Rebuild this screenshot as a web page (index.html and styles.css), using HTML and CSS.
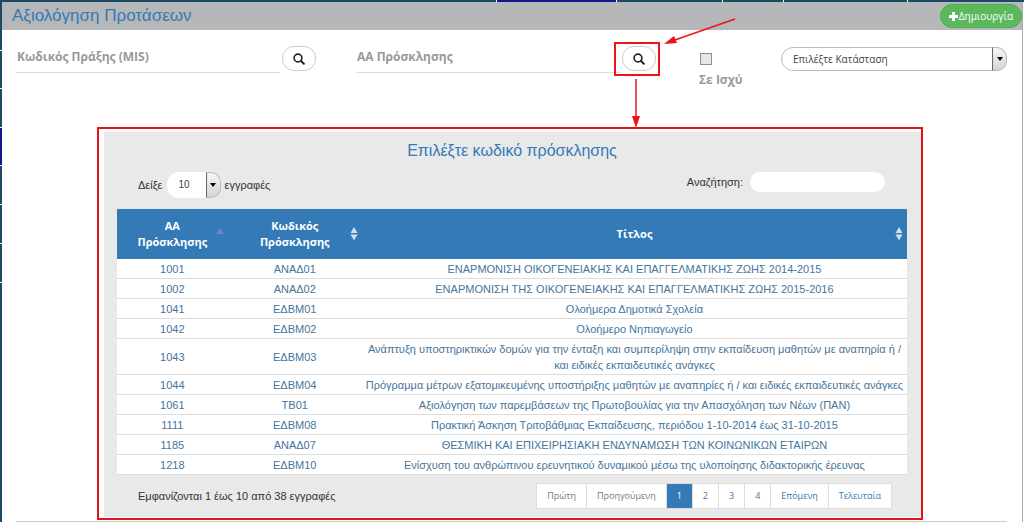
FILE: index.html
```html
<!DOCTYPE html>
<html lang="el">
<head>
<meta charset="utf-8">
<meta name="viewport" content="width=device-width, initial-scale=1">
<title>Αξιολόγηση Προτάσεων</title>
<link rel="stylesheet" href="styles.css">
</head>
<body>
<div class="topnav"><i></i><i class="current"></i><i></i><i></i><i></i><i></i></div>
<div class="shell">
  <div class="sidenav"><i></i><i></i><i></i><i class="current"></i><i></i><i></i><i></i><i></i></div>
  <main class="page">
    <header class="titlebar">
      <h1>Αξιολόγηση Προτάσεων</h1>
      <button class="create" type="button"><svg width="9" height="9" viewBox="0 0 9 9" aria-hidden="true"><path d="M3 0h3v3h3v3H6v3H3V6H0V3h3z" fill="#fff"/></svg>Δημιουργία</button>
    </header>
    <form class="filters">
      <div class="field">
        <input class="line" type="text" placeholder="Κωδικός Πράξης (MIS)" aria-label="Κωδικός Πράξης (MIS)">
        <div class="lookup">
          <button class="search" type="button" aria-label="Αναζήτηση πράξης"><svg width="12" height="12" viewBox="0 0 12 12" aria-hidden="true"><circle cx="5" cy="5" r="3.9" fill="none" stroke="#222" stroke-width="1.6"/><path d="M8 8l2.8 2.8" stroke="#222" stroke-width="2" stroke-linecap="round"/></svg></button>
        </div>
      </div>
      <div class="field">
        <input class="line" type="text" placeholder="ΑΑ Πρόσκλησης" aria-label="ΑΑ Πρόσκλησης">
        <div class="lookup">
          <button class="search" type="button" aria-label="Αναζήτηση πρόσκλησης"><svg width="12" height="12" viewBox="0 0 12 12" aria-hidden="true"><circle cx="5" cy="5" r="3.9" fill="none" stroke="#222" stroke-width="1.6"/><path d="M8 8l2.8 2.8" stroke="#222" stroke-width="2" stroke-linecap="round"/></svg></button>
          <span class="marker"></span>
          <svg class="pointer" width="130" height="118" viewBox="0 0 130 118" aria-hidden="true"><g fill="#f01018" stroke="#f01018"><path d="M121 8L58 30" stroke-width="1.5"/><path d="M50 33l10-8 3 7z" stroke="none"/><path d="M22 68v42" stroke-width="1.5"/><path d="M22 117l-4-12h8z" stroke="none"/></g></svg>
        </div>
      </div>
      <div class="active"><input type="checkbox" id="active"><label for="active">Σε Ισχύ</label></div>
      <div class="select status">
        <select aria-label="Κατάσταση"><option>Επιλέξτε Κατάσταση</option></select>
        <span class="drop"></span>
      </div>
    </form>
    <section class="dialog">
      <div class="panel">
        <h2>Επιλέξτε κωδικό πρόσκλησης</h2>
        <div class="tools">
          <label class="length">Δείξε <span class="select count"><select><option>10</option></select><span class="drop"></span></span> εγγραφές</label>
          <label class="find">Αναζήτηση: <input type="search"></label>
        </div>
        <table>
          <colgroup><col class="c1"><col class="c2"><col class="c3"></colgroup>
          <thead><tr>
            <th><div class="head"><span>ΑΑ Πρόσκλησης</span><svg width="8" height="14" viewBox="0 0 8 14" aria-hidden="true"><path d="M4 1l4 6H0z" fill="#7b7fd0"/></svg></div></th>
            <th><div class="head"><span>Κωδικός Πρόσκλησης</span><svg width="8" height="14" viewBox="0 0 8 14" aria-hidden="true"><path d="M4 0l3.5 6h-7zM.5 7.500h7L4 13.500z" fill="#cfe0ef"/></svg></div></th>
            <th><div class="head"><span>Τίτλος</span><svg width="8" height="14" viewBox="0 0 8 14" aria-hidden="true"><path d="M4 0l3.5 6h-7zM.5 7.500h7L4 13.500z" fill="#cfe0ef"/></svg></div></th>
          </tr></thead>
          <tbody>
            <tr><td>1001</td><td>ΑΝΑΔ01</td><td>ΕΝΑΡΜΟΝΙΣΗ ΟΙΚΟΓΕΝΕΙΑΚΗΣ ΚΑΙ ΕΠΑΓΓΕΛΜΑΤΙΚΗΣ ΖΩΗΣ 2014-2015</td></tr>
            <tr><td>1002</td><td>ΑΝΑΔ02</td><td>ΕΝΑΡΜΟΝΙΣΗ ΤΗΣ ΟΙΚΟΓΕΝΕΙΑΚΗΣ ΚΑΙ ΕΠΑΓΓΕΛΜΑΤΙΚΗΣ ΖΩΗΣ 2015-2016</td></tr>
            <tr><td>1041</td><td>ΕΔΒΜ01</td><td>Ολοήμερα Δημοτικά Σχολεία</td></tr>
            <tr><td>1042</td><td>ΕΔΒΜ02</td><td>Ολοήμερο Νηπιαγωγείο</td></tr>
            <tr><td>1043</td><td>ΕΔΒΜ03</td><td>Ανάπτυξη υποστηρικτικών δομών για την ένταξη και συμπερίληψη στην εκπαίδευση μαθητών με αναπηρία ή / και ειδικές εκπαιδευτικές ανάγκες</td></tr>
            <tr><td>1044</td><td>ΕΔΒΜ04</td><td>Πρόγραμμα μέτρων εξατομικευμένης υποστήριξης μαθητών με αναπηρίες ή / και ειδικές εκπαιδευτικές ανάγκες</td></tr>
            <tr><td>1061</td><td>ΤΒ01</td><td>Αξιολόγηση των παρεμβάσεων της Πρωτοβουλίας για την Απασχόληση των Νέων (ΠΑΝ)</td></tr>
            <tr><td>1111</td><td>ΕΔΒΜ08</td><td>Πρακτική Άσκηση Τριτοβάθμιας Εκπαίδευσης, περιόδου 1-10-2014 έως 31-10-2015</td></tr>
            <tr><td>1185</td><td>ΑΝΑΔ07</td><td>ΘΕΣΜΙΚΗ ΚΑΙ ΕΠΙΧΕΙΡΗΣΙΑΚΗ ΕΝΔΥΝΑΜΩΣΗ ΤΩΝ ΚΟΙΝΩΝΙΚΩΝ ΕΤΑΙΡΩΝ</td></tr>
            <tr><td>1218</td><td>ΕΔΒΜ10</td><td>Ενίσχυση του ανθρώπινου ερευνητικού δυναμικού μέσω της υλοποίησης διδακτορικής έρευνας</td></tr>
          </tbody>
        </table>
        <div class="foot">
          <p>Εμφανίζονται 1 έως 10 από 38 εγγραφές</p>
          <nav class="pages">
            <a class="off" href="#">Πρώτη</a><a class="off" href="#">Προηγούμενη</a><a class="on" href="#">1</a><a href="#">2</a><a href="#">3</a><a href="#">4</a><a href="#">Επόμενη</a><a href="#">Τελευταία</a>
          </nav>
        </div>
      </div>
    </section>
    <hr>
  </main>
</div>
</body>
</html>
```
FILE: styles.css
```css
* { box-sizing: border-box; }
body {
  margin: 0;
  background: #fff;
  color: #333;
  font: 11px/16px "Liberation Sans", Arial, sans-serif;
}
h1, h2, p { margin: 0; font-weight: 400; }
input, select, button { font: inherit; }

.topnav {
  display: grid;
  grid-template-columns: 496fr 118fr 105fr 60fr 123fr 116fr;
  gap: 1px;
  height: 2px;
}
.topnav i, .sidenav i { background: #1c4966; }
.topnav .current, .sidenav .current { background: #16168c; }

.shell { display: flex; }
.sidenav {
  display: grid;
  flex: none;
  grid-template-rows: 48fr 37fr 38fr 38fr 38fr 38fr 38fr 240fr;
  gap: 1px;
  width: 2px;
}
.page { flex: 1; min-width: 0; margin-right: 1px; border-right: 1px solid #aaa; }

.titlebar {
  display: flex;
  align-items: center;
  justify-content: space-between;
  height: 28px;
  padding-left: 10px;
  background: #b5b7b8;
}
h1 { color: #337ab7; font: 17px/24px "Liberation Sans", Arial, sans-serif; }
.create {
  display: flex;
  align-items: center;
  gap: 1px;
  height: 24px;
  padding: 0 8px;
  border: 1px solid #4cae4c;
  border-radius: 12px;
  background: #5cb85c;
  color: #fff;
  font: 10px/16px "Open Sans", sans-serif;
}

.filters {
  display: grid;
  grid-template-columns: 340fr 340fr 85fr 226fr;
  align-items: start;
  padding: 16px 15px 0 14px;
}
.field { display: flex; gap: 2px; padding-right: 40px; }
.line {
  flex: 1;
  min-width: 0;
  height: 27px;
  padding: 0 1px 6px;
  border: 0;
  border-bottom: 1px solid #ddd;
}
.line, .active { color: #999; font: bold 12px/16px "Open Sans", sans-serif; }
.line::placeholder { color: #999; opacity: 1; }
.lookup { position: relative; }
.search {
  display: flex;
  align-items: center;
  justify-content: center;
  width: 34px;
  height: 25px;
  padding: 0;
  border: 1px solid #ccc;
  border-radius: 12px;
  background: #fff;
}
.marker {
  position: absolute;
  inset: -4px -4px -3px -8px;
  border: 2px solid #f01018;
  pointer-events: none;
}
.pointer { position: absolute; left: -8px; top: -35px; pointer-events: none; z-index: 1; }
.active { display: flex; flex-direction: column; align-items: flex-start; gap: 7px; padding: 7px 0 0 3px; }
.active input {
  appearance: none;
  width: 12px;
  height: 12px;
  margin: 0 1px;
  border: 1px solid #8f8f8f;
  background: #e6e6e6;
}

.select { position: relative; display: inline-block; }
.select select {
  appearance: none;
  width: 100%;
  height: 24px;
  border: 1px solid #bbb;
  border-radius: 12px;
  background: #fff;
  color: #444;
}
.drop {
  position: absolute;
  top: 0;
  right: 0;
  display: grid;
  place-items: center;
  width: 15px;
  height: 24px;
  border: 1px solid #bbb;
  border-left-color: #666;
  border-radius: 0 10px 10px 0;
  background: linear-gradient(#f6f6f6, #d4d4d4);
  pointer-events: none;
}
.drop::after {
  content: "";
  border: 3px solid transparent;
  border-top: 4px solid #000;
  border-bottom: 0;
}
.status { margin-top: 1px; }
.status select { padding: 0 11px; font: 10px/16px "Open Sans", sans-serif; }

.dialog { margin: 39px 99px 1px 95px; border: 2px solid #e0141a; }
.panel { margin: 3px 0 1px 5px; padding: 7px 14px 8px 13px; background: #e9e9e9; }
h2 { color: #337ab7; font: 16px/24px "Liberation Sans", Arial, sans-serif; text-align: center; }
.tools { display: flex; justify-content: space-between; padding: 9px 22px 11px 21px; }
.length { display: flex; align-items: center; gap: 4px; }
.count { width: 54px; }
.count select { height: 26px; padding: 0 12px; border: 0; font-size: 10px; }
.count .drop { height: 26px; }
.find { display: flex; align-items: center; gap: 7px; height: 20px; }
.find input { width: 135px; height: 20px; padding: 0 10px; border: 0; border-radius: 10px; background: #fff; }

table { width: 100%; border-collapse: collapse; table-layout: fixed; background: #fff; color: #46759b; }
.c1 { width: 14%; }
.c2 { width: 17%; }
.c3 { width: 69%; }
th { height: 50px; padding: 0 4px; background: #337ab7; color: #fff; font: bold 11px/16px "Open Sans", sans-serif; }
.head { display: flex; align-items: center; padding-left: 8px; }
.head span { flex: 1; }
td { padding: 2px 1px 1px; border-bottom: 1px solid #ddd; text-align: center; }

.foot { display: flex; align-items: center; justify-content: space-between; padding: 8px 15px 0 21px; }
.pages { display: flex; border: 1px solid #ddd; background: #fff; }
.pages a {
  padding: 4px 10px;
  border-right: 1px solid #ddd;
  color: #337ab7;
  font: 9px/16px "Open Sans", sans-serif;
  text-decoration: none;
}
.pages a:last-child { border: 0; }
.pages .off { color: #777; }
.pages .on { background: #337ab7; color: #fff; }
hr { height: 1px; margin: 0 15px 0 14px; border: 0; background: #ccc; }
```
